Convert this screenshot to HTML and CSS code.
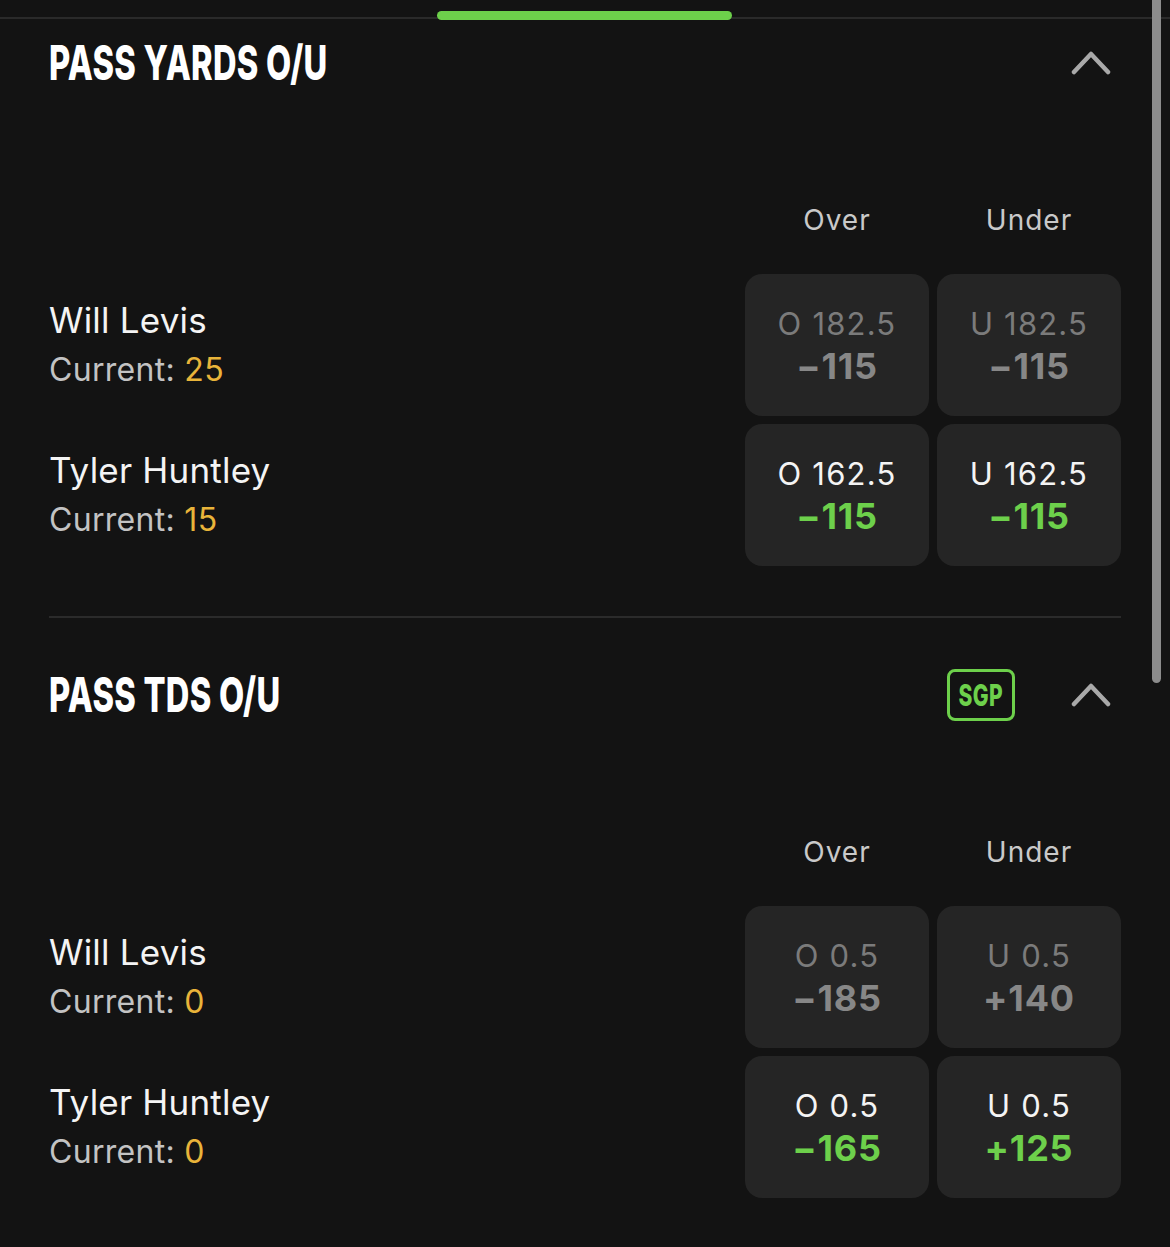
FILE: index.html
```html
<!DOCTYPE html>
<html lang="en">
<head>
<meta charset="utf-8">
<title>Player Props</title>
<link rel="stylesheet" href="styles.css">
</head>
<body>
<div class="tabs"><div class="indicator"></div></div>

<section class="market">
  <div class="market-head">
    <h2 class="market-title"><span>PASS YARDS O/U</span></h2>
    <div class="head-actions">
      <svg class="chevron" viewBox="0 0 46 24" width="46" height="24"><path d="M6 21 L23 3 L40 21" fill="none" stroke="#a9a9a9" stroke-width="4.5" stroke-linecap="round" stroke-linejoin="round"/></svg>
    </div>
  </div>
  <div class="cols"><span>Over</span><span>Under</span></div>
  <div class="rows">
    <div class="row">
      <div class="player"><div class="name">Will Levis</div><div class="current">Current: <span class="val">25</span></div></div>
      <div class="odds">
        <button class="btn off"><span class="line">O 182.5</span><span class="price">−115</span></button>
        <button class="btn off"><span class="line">U 182.5</span><span class="price">−115</span></button>
      </div>
    </div>
    <div class="row">
      <div class="player"><div class="name">Tyler Huntley</div><div class="current">Current: <span class="val">15</span></div></div>
      <div class="odds">
        <button class="btn"><span class="line">O 162.5</span><span class="price">−115</span></button>
        <button class="btn"><span class="line">U 162.5</span><span class="price">−115</span></button>
      </div>
    </div>
  </div>
  <hr class="divider">
</section>

<section class="market">
  <div class="market-head">
    <h2 class="market-title"><span>PASS TDS O/U</span></h2>
    <div class="head-actions">
      <span class="sgp"><span>SGP</span></span>
      <svg class="chevron" viewBox="0 0 46 24" width="46" height="24"><path d="M6 21 L23 3 L40 21" fill="none" stroke="#a9a9a9" stroke-width="4.5" stroke-linecap="round" stroke-linejoin="round"/></svg>
    </div>
  </div>
  <div class="cols"><span>Over</span><span>Under</span></div>
  <div class="rows">
    <div class="row">
      <div class="player"><div class="name">Will Levis</div><div class="current">Current: <span class="val">0</span></div></div>
      <div class="odds">
        <button class="btn off"><span class="line">O 0.5</span><span class="price">−185</span></button>
        <button class="btn off"><span class="line">U 0.5</span><span class="price">+140</span></button>
      </div>
    </div>
    <div class="row">
      <div class="player"><div class="name">Tyler Huntley</div><div class="current">Current: <span class="val">0</span></div></div>
      <div class="odds">
        <button class="btn"><span class="line">O 0.5</span><span class="price">−165</span></button>
        <button class="btn"><span class="line">U 0.5</span><span class="price">+125</span></button>
      </div>
    </div>
  </div>
</section>

<div class="scrollbar"></div>
</body>
</html>
```

FILE: styles.css
```css
html, body {
  margin: 0;
  padding: 0;
  background: #131313;
  height: 100%;
  overflow: hidden;
}
body {
  font-family: Inter, "Noto Sans", Roboto, sans-serif;
  color: #f4f4f4;
  position: relative;
}

.tabs {
  height: 20px;
  padding-top: 11px;
  box-sizing: border-box;
  background: linear-gradient(to bottom, transparent 17px, #2a2a2a 17px, #2a2a2a 19px, transparent 19px);
}
.indicator {
  margin-left: 437px;
  width: 295px;
  height: 9px;
  border-radius: 5px;
  background: #6dd04b;
}

.market {
  padding: 0 49px;
}
.market-head {
  height: 86px;
  display: flex;
  align-items: center;
  justify-content: space-between;
}
.market + .market .market-head {
  margin-top: 34px;
}
.market-title {
  margin: 0;
  font-family: Inter, Roboto, sans-serif;
  font-weight: 800;
  font-size: 48px;
  line-height: 1;
  color: #ffffff;
  letter-spacing: 0.4px;
}
.market-title span {
  display: inline-block;
  transform: scaleX(0.68);
  transform-origin: left center;
  white-space: nowrap;
}
.head-actions {
  display: flex;
  align-items: center;
  gap: 53px;
  margin-right: 7px;
}
.chevron {
  display: block;
}
.sgp {
  box-sizing: border-box;
  width: 68px;
  height: 52px;
  border: 3px solid #6dd04b;
  border-radius: 8px;
  display: flex;
  align-items: center;
  justify-content: center;
  color: #6dd04b;
  font-weight: 800;
  font-size: 30px;
}
.sgp span {
  display: inline-block;
  transform: scaleX(0.7);
  letter-spacing: 0.5px;
}

.cols {
  margin-top: 94px;
  height: 40px;
  display: flex;
  justify-content: flex-end;
  gap: 8px;
  font-size: 28px;
  color: #c9c9c9;
  letter-spacing: 1px;
}
.cols span {
  width: 184px;
  text-align: center;
  line-height: 40px;
}

.rows {
  margin-top: 34px;
  display: flex;
  flex-direction: column;
  gap: 8px;
}
.row {
  display: flex;
  align-items: center;
  justify-content: space-between;
  height: 142px;
}
.player {
  display: flex;
  flex-direction: column;
  gap: 12px;
}
.name {
  font-size: 35px;
  line-height: 38px;
  color: #f4f4f4;
  letter-spacing: 0.2px;
}
.current {
  font-size: 32px;
  line-height: 38px;
  color: #c3c3c3;
  letter-spacing: 0.3px;
}
.current .val {
  color: #e9b43a;
}

.odds {
  display: flex;
  gap: 8px;
  height: 100%;
}
.btn {
  width: 184px;
  height: 142px;
  border: 0;
  padding: 0;
  border-radius: 17px;
  background: #252525;
  display: flex;
  flex-direction: column;
  align-items: center;
  justify-content: center;
  font-family: Inter, Roboto, sans-serif;
  gap: 3px;
}
.btn .line {
  font-size: 31px;
  line-height: 38px;
  color: #f4f4f4;
  letter-spacing: 1.2px;
}
.btn .price {
  font-size: 36px;
  line-height: 40px;
  font-weight: 700;
  color: #6dd04b;
  letter-spacing: 0.8px;
}
.btn.off .line {
  color: #7b7b7b;
}
.btn.off .price {
  color: #878787;
}

.divider {
  margin: 50px 0 0;
  border: 0;
  height: 2px;
  background: #2b2b2b;
}

.scrollbar {
  position: absolute;
  top: 0;
  left: 1152px;
  width: 9px;
  height: 683px;
  background: #8c8c8c;
  border-radius: 0 0 5px 5px;
}
```
